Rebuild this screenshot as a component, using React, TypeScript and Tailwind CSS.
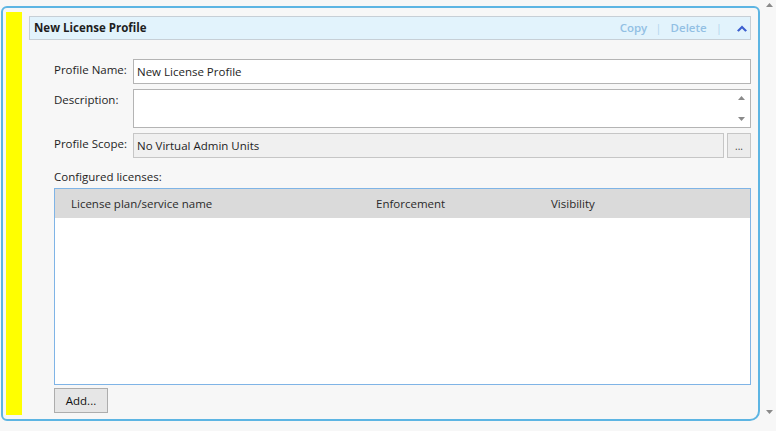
import React from "react";

function Tri({ up, className }: { up?: boolean; className?: string }) {
  return (
    <svg width="7" height="4" viewBox="0 0 7 4" className={className}>
      <path d={up ? "M0 4 L3.5 0 L7 4 Z" : "M0 0 L3.5 4 L7 0 Z"} fill="#8a8a8a" />
    </svg>
  );
}

function FieldRow({ label, children, h }: { label: string; children: React.ReactNode; h: string }) {
  return (
    <div className={`flex ${h}`}>
      <div className="w-[79px] shrink-0 pt-[3px] text-[11.5px] leading-[16px] text-[#1e1e1e]">{label}</div>
      {children}
    </div>
  );
}

export default function App() {
  return (
    <div className="flex h-[431px] w-[776px] bg-[#f7f7f7] font-['Open_Sans','Noto_Sans',sans-serif] text-[#1e1e1e]">
      <div className="flex-1 pb-[10px] pl-px pr-[2px] pt-[6px]">
        <div className="flex h-full rounded-[6px] rounded-br-[10px] border-2 border-[#5db5e3] py-[4px] pl-[3px] pr-[7px]">
          <div className="w-4 shrink-0 bg-[#ffff00]" />
          <div className="ml-[7px] flex flex-1 flex-col pt-[4px]">
            <div className="flex h-[24px] items-center border border-[#c7cfd6] bg-[#e2f3fc] pl-[4px] pr-[3px]">
              <span className="text-[11.5px] font-bold">New License Profile</span>
              <div className="ml-auto flex items-center text-[11.5px] font-semibold text-[#92c0e4]">
                <span>Copy</span>
                <span className="ml-[8px] mr-[9px] font-normal text-[#b5d6ee]">|</span>
                <span>Delete</span>
                <span className="ml-[9px] mr-[15px] font-normal text-[#b5d6ee]">|</span>
                <svg width="10" height="7" viewBox="0 0 10 7">
                  <path d="M0 5.5 L5 0.5 L10 5.5 L8.3 6.8 L5 3.6 L1.7 6.8 Z" fill="#3c5fcf" />
                </svg>
              </div>
            </div>

            <div className="ml-[25px] mt-[19px] flex flex-col gap-[5px]">
              <FieldRow label="Profile Name:" h="h-[25px]">
                <div className="flex flex-1 items-center border border-[#b4b4b4] bg-white px-[3px] text-[11.5px]">
                  New License Profile
                </div>
              </FieldRow>
              <FieldRow label="Description:" h="h-[39px]">
                <div className="flex flex-1 justify-end border border-[#b4b4b4] bg-white">
                  <div className="flex w-[18px] flex-col items-center justify-between py-[6px]">
                    <Tri up />
                    <Tri />
                  </div>
                </div>
              </FieldRow>
              <FieldRow label="Profile Scope:" h="h-[25px]">
                <div className="flex flex-1 items-center border border-[#c6c6c6] bg-[#f0f0f0] px-[3px] text-[11.5px]">
                  No Virtual Admin Units
                </div>
                <div className="ml-[3px] flex w-[24px] items-center justify-center border border-[#c6c6c6] bg-[#ececec] text-[10px] leading-none text-[#444]">
                  ...
                </div>
              </FieldRow>

              <div className="mt-[6px] h-[16px] text-[11.5px] leading-[16px]">Configured licenses:</div>
              <div className="-mt-[2px] flex h-[197px] flex-col border border-[#7fb4e6] bg-white">
                <div className="flex h-[29px] items-center bg-[#dadada] text-[11.5px] text-[#2a2a2a]">
                  <div className="w-[321px] pl-[16px]">License plan/service name</div>
                  <div className="w-[175px]">Enforcement</div>
                  <div>Visibility</div>
                </div>
              </div>
              <button className="-mt-[2px] flex h-[25px] w-[54px] items-center justify-center border border-[#adadad] bg-[#e6e6e6] text-[11.5px] text-[#111]">
                Add...
              </button>
            </div>
          </div>
        </div>
      </div>
      <div className="flex w-[14px] flex-col items-center justify-between pb-[17px] pt-[3px]">
        <Tri up />
        <Tri />
      </div>
    </div>
  );
}
